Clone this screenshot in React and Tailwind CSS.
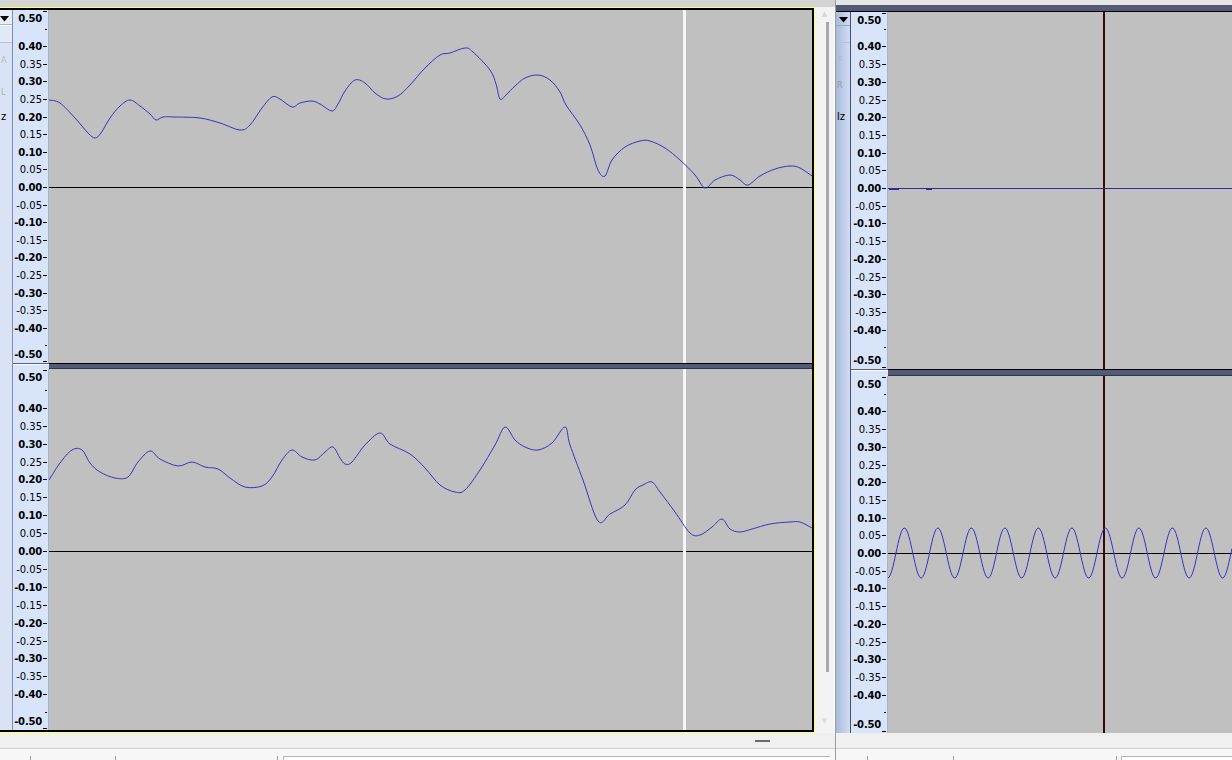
import React from 'react';

const WAVE = '#3434c4';

// catmull-rom through the points, in global page coords
const smooth = (pts) => {
  let d = `M${pts[0][0]},${pts[0][1]}`;
  for (let i = 0; i < pts.length - 1; i++) {
    const p0 = pts[i - 1] || pts[i];
    const p1 = pts[i];
    const p2 = pts[i + 1];
    const p3 = pts[i + 2] || p2;
    const c1x = p1[0] + (p2[0] - p0[0]) / 6;
    const c1y = p1[1] + (p2[1] - p0[1]) / 6;
    const c2x = p2[0] - (p3[0] - p1[0]) / 6;
    const c2y = p2[1] - (p3[1] - p1[1]) / 6;
    d += ` C${c1x.toFixed(1)},${c1y.toFixed(1)} ${c2x.toFixed(1)},${c2y.toFixed(1)} ${p2[0]},${p2[1]}`;
  }
  return d;
};

const LEFT_TOP = [
  [49, 100], [60, 103], [75, 118], [88, 133], [95, 138], [101, 133], [110, 118], [120, 106],
  [130, 100], [140, 106], [150, 114], [156, 120], [163, 117], [175, 117], [200, 118],
  [220, 123], [240, 130], [250, 125], [262, 108], [272, 97], [280, 99], [292, 107],
  [300, 103], [312, 101], [320, 104], [332, 111], [338, 104], [345, 91], [355, 80],
  [365, 83], [375, 93], [386, 99], [398, 96], [410, 85], [425, 68], [440, 55], [450, 53],
  [465, 48], [473, 52], [490, 70], [496, 84], [500, 99], [506, 95], [515, 86], [525, 78],
  [538, 75], [550, 80], [560, 92], [566, 105], [580, 125], [590, 145], [598, 170],
  [605, 176], [612, 160], [625, 147], [640, 141], [650, 141], [665, 148], [680, 160],
  [695, 175], [705, 188], [715, 180], [730, 175], [740, 180], [748, 185], [760, 176],
  [775, 169], [790, 166], [800, 168], [812, 176],
];

const LEFT_BOTTOM = [
  [49, 480], [60, 463], [72, 450], [82, 450], [90, 463], [100, 472], [115, 478], [128, 477],
  [138, 462], [150, 451], [160, 459], [178, 466], [192, 462], [205, 467], [218, 469],
  [230, 478], [245, 487], [262, 486], [272, 477], [282, 460], [292, 450], [302, 457],
  [315, 460], [325, 452], [333, 447], [340, 458], [345, 464], [352, 462], [365, 445],
  [380, 433], [390, 444], [410, 454], [425, 468], [440, 485], [455, 492], [465, 490],
  [480, 470], [495, 445], [505, 427], [515, 440], [525, 447], [538, 450], [552, 443],
  [565, 427], [570, 445], [583, 480], [598, 521], [610, 514], [625, 505], [635, 490],
  [643, 485], [652, 482], [660, 492], [675, 512], [690, 533], [700, 535], [712, 527],
  [722, 519], [730, 529], [740, 532], [752, 529], [770, 524], [790, 522], [800, 522],
  [812, 528],
];

const sinePath = () => {
  let d = '';
  for (let x = 0; x <= 344; x++) {
    const y = 177 - 25 * Math.sin((2 * Math.PI * (x + 888 - 896)) / 33.5);
    d += `${x === 0 ? 'M' : 'L'}${x},${y.toFixed(2)} `;
  }
  return d;
};

function Ruler({ h, zero, scale, className }) {
  const marks = [];
  for (let i = 8; i >= -8; i--) {
    marks.push({
      y: zero - i * 0.05 * scale,
      text: (i < 0 ? '-' : '') + (Math.abs(i) * 0.05).toFixed(2),
      bold: i % 2 === 0,
      tick: true,
    });
  }
  marks.unshift({ y: 8, text: '0.50', bold: true, tick: false });
  marks.push({ y: h - 9, text: '-0.50', bold: true, tick: false });
  const minor = [zero - 0.45 * scale, zero + 0.45 * scale];

  return (
    <div className={`relative shrink-0 h-full bg-[#d8e4fa] ${className}`}>
      {marks.map((m) => (
        <React.Fragment key={m.text + m.y}>
          <span
            className={`absolute right-[6px] text-[10px] leading-[12px] text-black ${m.bold ? 'font-bold tracking-[-0.2px]' : ''}`}
            style={{ top: m.y - 5 }}
          >
            {m.text}
          </span>
          {m.tick && <span className="absolute right-[1px] w-[4px] h-px bg-black" style={{ top: Math.round(m.y) }} />}
        </React.Fragment>
      ))}
      {minor.map((y) => (
        <span key={y} className="absolute right-[1px] w-[2px] h-px bg-black" style={{ top: Math.round(y) }} />
      ))}
      <span className="absolute right-[1px] top-[1px] w-[4px] h-px bg-black" />
      <span className="absolute right-[1px] bottom-[1px] w-[4px] h-px bg-black" />
    </div>
  );
}

function Channel({ hCls, h, zero, scale, rulerCls, children }) {
  return (
    <div className={`flex shrink-0 ${hCls}`}>
      <Ruler h={h} zero={zero} scale={scale} className={rulerCls} />
      <div className="flex-1 h-full bg-[#c0c0c0] overflow-hidden">
        <svg className="block w-full h-full">{children}</svg>
      </div>
    </div>
  );
}

function Divider({ hCls, rulerCls }) {
  return (
    <div className={`flex shrink-0 ${hCls}`}>
      <div className={`h-full flex flex-col ${rulerCls}`}>
        <div className="h-px bg-[#5a6078]" />
        <div className="h-px bg-white" />
        <div className="flex-1 bg-[#d8e4fa]" />
      </div>
      <div className="flex-1 flex flex-col">
        <div className="h-px bg-black" />
        <div className="flex-1 bg-[#525a78]" />
        <div className="h-px bg-[#30364a]" />
      </div>
    </div>
  );
}

function Arrow() {
  return (
    <svg width="9" height="6" viewBox="0 0 9 6" className="block">
      <path d="M0 0 H9 L4.5 5.5 Z" fill="#000" />
    </svg>
  );
}

function StatusBar({ cells, boxGap, className }) {
  return (
    <div className={`flex h-[12px] border-t border-[#d0d0d0] bg-[#f7f7f7] ${className}`}>
      {cells.map((w, i) => (
        <React.Fragment key={i}>
          <div className="shrink-0" style={{ width: w }} />
          <div className="w-px h-[4px] self-end bg-[#a0a0a0]" />
        </React.Fragment>
      ))}
      <div className="shrink-0" style={{ width: boxGap }} />
      <div className="flex-1 mt-[7px] border-t border-l border-[#b4b4b4] bg-white" />
    </div>
  );
}

function LeftWindow() {
  return (
    <div className="flex flex-col w-[835px] shrink-0">
      <div className="h-[7px] bg-[#d4d4d4]" />
      <div className="flex h-[726px]">
        <div className="w-[815px] border-t border-r border-b border-[#ffff70]">
          <div className="flex h-full border-t-2 border-r-2 border-b-2 border-black">
            <div className="w-[12px] shrink-0 h-full flex flex-col bg-[#d9e3f5] overflow-hidden text-[8px] leading-[9px]">
              <div className="h-[14px] bg-[#e6edf8] pt-[6px]">
                <Arrow />
              </div>
              <div className="h-px bg-[#aab6cc]" />
              <div className="h-px bg-white" />
              <div className="h-[16px] bg-[#e2e9f6]" />
              <div className="h-px bg-[#b8c4d8]" />
              <div className="mt-[13px] ml-[1px] text-[#b8b8b8]">A</div>
              <div className="mt-[23px] ml-[1px] text-[#b4b4b4]">L</div>
              <div className="mt-[15px] ml-[1px] text-[10px] leading-[10px] text-black">z</div>
            </div>
            <div className="flex flex-col flex-1">
              <Channel hCls="h-[353px]" h={353} zero={177} scale={352} rulerCls="w-[37px] border-l border-[#7d8bab] border-r border-r-[#a8b4cc]">
                <line x1="0" x2="763" y1="177.5" y2="177.5" stroke="#000" strokeWidth="1" />
                <rect x="634" y="0" width="3" height="353" fill="#f6f6f6" />
                <g transform="translate(-49,-10)">
                  <path d={smooth(LEFT_TOP)} fill="none" stroke={WAVE} strokeWidth="1" />
                </g>
              </Channel>
              <Divider hCls="h-[6px]" rulerCls="w-[37px] border-l border-[#7d8bab]" />
              <Channel hCls="h-[361px]" h={361} zero={182} scale={358} rulerCls="w-[37px] border-l border-[#7d8bab] border-r border-r-[#a8b4cc]">
                <line x1="0" x2="763" y1="182.5" y2="182.5" stroke="#000" strokeWidth="1" />
                <rect x="634" y="0" width="3" height="361" fill="#f6f6f6" />
                <g transform="translate(-49,-369)">
                  <path d={smooth(LEFT_BOTTOM)} fill="none" stroke={WAVE} strokeWidth="1" />
                </g>
              </Channel>
            </div>
          </div>
        </div>
        <div className="w-[20px] flex flex-col bg-[#f3f3f3] border-r border-[#fafafa]">
          <div className="h-[15px] flex justify-center pt-[4px] text-[7px] leading-[7px] text-[#d4d4d4]">▲</div>
          <div className="ml-[11px] w-[3px] h-[650px] bg-[#a8a8a8]" />
          <div className="flex-1" />
          <div className="h-[15px] flex justify-center text-[7px] leading-[7px] text-[#dcdcdc]">▼</div>
        </div>
      </div>
      <div className="h-[15px] bg-[#f0f0f0] pl-[755px] pt-[7px]">
        <div className="w-[15px] h-[2px] bg-[#6a6a6a]" />
      </div>
      <StatusBar cells={[30, 84, 161]} boxGap={5} className="pr-[5px]" />
    </div>
  );
}

function RightWindow() {
  return (
    <div className="flex flex-col w-[396px] shrink-0">
      <div className="h-[5px] bg-[#e6e6e6]" />
      <div className="h-[7px] bg-[#525a78] border-b border-black" />
      <div className="flex h-[721px]">
        <div className="w-[14px] shrink-0 h-full flex flex-col bg-linear-to-r from-[#a8badc] to-[#d2ddf3] overflow-hidden text-[8px] leading-[9px]">
          <div className="h-[13px] pt-[5px] pl-[3px]">
            <Arrow />
          </div>
          <div className="h-px bg-[#98a8c8]" />
          <div className="h-[16px]" />
          <div className="h-px bg-[#b4c2dc]" />
          <div className="mt-[13px] ml-[2px] text-[#b8b8b8]">F</div>
          <div className="mt-[16px] ml-[1px] text-[#9a9a9a]">R</div>
          <div className="mt-[22px] ml-[1px] text-[10px] leading-[10px] text-black">lz</div>
        </div>
        <div className="flex flex-col flex-1">
          <Channel hCls="h-[357px]" h={357} zero={176} scale={354} rulerCls="w-[38px] border-l border-[#46506a] border-r border-r-[#a8b4cc]">
            <line x1="0" x2="344" y1="176.5" y2="176.5" stroke="#2c2c9a" strokeWidth="1" />
            <rect x="1" y="176" width="10" height="2" fill="#2c2c9a" />
            <rect x="38" y="176" width="6" height="2" fill="#2c2c9a" />
            <rect x="215" y="0" width="2" height="357" fill="#3c0606" />
          </Channel>
          <Divider hCls="h-[7px]" rulerCls="w-[38px] border-l border-[#46506a]" />
          <Channel hCls="h-[357px]" h={357} zero={177} scale={354} rulerCls="w-[38px] border-l border-[#46506a] border-r border-r-[#a8b4cc]">
            <line x1="0" x2="344" y1="177.5" y2="177.5" stroke="#000" strokeWidth="1" />
            <rect x="215" y="0" width="2" height="357" fill="#3c0606" />
            <path d={sinePath()} fill="none" stroke={WAVE} strokeWidth="1" />
          </Channel>
        </div>
      </div>
      <div className="h-[15px] bg-[#f0f0f0]" />
      <StatusBar cells={[31, 85, 162]} boxGap={4} />
    </div>
  );
}

export default function App() {
  return (
    <div className="flex w-[1232px] h-[760px] overflow-hidden bg-[#f0f0f0] font-['DejaVu_Sans',sans-serif]">
      <LeftWindow />
      <div className="w-px shrink-0 bg-[#9c9c9c]" />
      <RightWindow />
    </div>
  );
}
